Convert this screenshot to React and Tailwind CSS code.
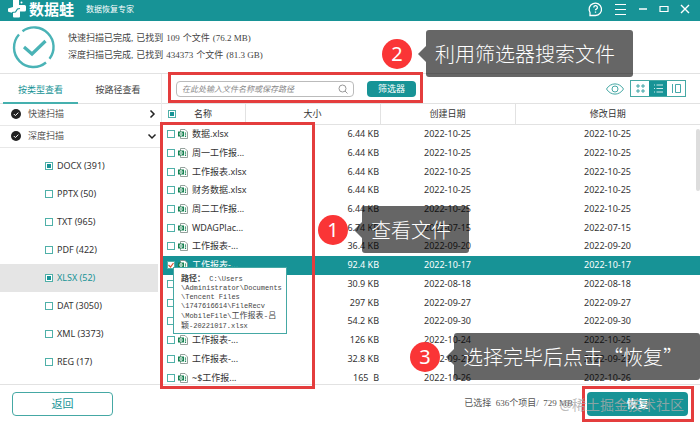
import React, { useState } from 'react';

const TYPES = [
  { name: 'DOCX', count: 391, checked: true },
  { name: 'PPTX', count: 50 },
  { name: 'TXT', count: 965 },
  { name: 'PDF', count: 422 },
  { name: 'XLSX', count: 52, checked: true, active: true },
  { name: 'DAT', count: 3050 },
  { name: 'XML', count: 3373 },
  { name: 'REG', count: 17 },
];

const FILES = [
  { name: '数据.xlsx', size: '6.44 KB', created: '2022-10-25', modified: '2022-10-25' },
  { name: '周一工作报...', size: '6.44 KB', created: '2022-10-25', modified: '2022-10-25' },
  { name: '工作报表.xlsx', size: '6.44 KB', created: '2022-10-25', modified: '2022-10-25' },
  { name: '财务数据.xlsx', size: '6.44 KB', created: '2022-10-25', modified: '2022-10-25' },
  { name: '周二工作报...', size: '6.44 KB', created: '2022-10-25', modified: '2022-10-25' },
  { name: 'WDAGPlac...', size: '6.74 KB', created: '2022-07-15', modified: '2022-07-15' },
  { name: '工作报表-...', size: '36.4 KB', created: '2022-09-20', modified: '2022-09-20' },
  { name: '工作报表-...', size: '92.4 KB', created: '2022-10-17', modified: '2022-10-17', selected: true },
  { name: '工作报表-...', size: '30.9 KB', created: '2022-08-18', modified: '2022-08-18' },
  { name: '工作报表-...', size: '297 KB', created: '2022-09-27', modified: '2022-09-27' },
  { name: '工作报表-...', size: '54.2 KB', created: '2022-09-30', modified: '2022-09-30' },
  { name: '工作报表-...', size: '126 KB', created: '2022-10-24', modified: '2022-10-25' },
  { name: '工作报表-...', size: '32.8 KB', created: '2022-09-29', modified: '2022-09-29' },
  { name: '~$工作报...', size: '165\u00a0 B', created: '2022-10-26', modified: '2022-10-26' },
];

const boxBase = 'block size-2 shrink-0 appearance-none border border-[#4fb0a8] bg-white';
const boxPartial = 'checked:bg-[#179396] checked:shadow-[inset_0_0_0_1px_white]';

function Logo() {
  return (
    <svg className="h-[18px] w-[18px]" viewBox="0 0 18 18" fill="white" aria-hidden="true">
      <path d="M5 0h6v5h5.500a1.500 1.500 0 0 1 1.500 1.500v3.500a1.500 1.500 0 0 1-1.500 1.500H12v5a1 1 0 0 1-1 1H6a1 1 0 0 1-1-1V13L1 12a1 1 0 0 1-1-1V8.500L5 7z" />
      <path d="M4 12.500l3.500-.5 2-3 2.500-.5" fill="none" stroke="#179396" strokeWidth="1.200" />
      <circle cx="13.500" cy="2.500" r="1" />
    </svg>
  );
}

function TitleBar() {
  return (
    <header className="flex h-[21px] shrink-0 items-center bg-[#179396] pr-[9px] pb-[3px] pl-2 text-white">
      <Logo />
      <h1 className="ml-[3px] text-[15px] leading-4 font-bold">数据蛙</h1>
      <span className="ml-3 text-[8px] leading-4">数据恢复专家</span>
      <div className="ml-auto flex items-center gap-[9px]">
        <button type="button" aria-label="help" className="size-4">
          <svg viewBox="0 0 16 16" className="size-4" fill="none" stroke="currentColor" strokeWidth="1.300">
            <path d="M3 14.500V11.500A6.200 6.200 0 1 1 8.500 14.500z" />
            <path d="M6.800 6.500a1.800 1.800 0 1 1 2.500 1.600c-.6.300-.8.600-.8 1.200M8.500 10.500v1.200" />
          </svg>
        </button>
        <button type="button" aria-label="menu" className="size-4">
          <svg viewBox="0 0 16 16" className="size-4" stroke="currentColor" strokeWidth="1.200">
            <path d="M3 3.500h11M3 8.500h11M3 13.500h11" />
          </svg>
        </button>
        <button type="button" aria-label="minimize" className="size-3">
          <svg viewBox="0 0 12 12" className="size-3" stroke="currentColor" strokeWidth="1.500">
            <path d="M2 6h8" />
          </svg>
        </button>
        <button type="button" aria-label="maximize" className="size-3">
          <svg viewBox="0 0 12 12" className="size-3" fill="none" stroke="currentColor" strokeWidth="1.200">
            <path d="M2 3.500h8v5h-8z" />
          </svg>
        </button>
        <button type="button" aria-label="close" className="size-3">
          <svg viewBox="0 0 12 12" className="size-3" stroke="currentColor" strokeWidth="1.400">
            <path d="M2 2l8 8M10 2l-8 8" />
          </svg>
        </button>
      </div>
    </header>
  );
}

function ScanLine({ label, count, size }) {
  return (
    <p className="flex gap-[3px]">
      <span>{label},</span>
      <span>已找到</span>
      <span>{count}</span>
      <span>个文件</span>
      <span>({size})</span>
    </p>
  );
}

function ScanStatus() {
  return (
    <section className="flex h-[53px] shrink-0 items-center border-b border-[#e2e2e2] pl-3">
      <svg className="size-11 shrink-0" viewBox="0 0 44 44" fill="none" stroke="#4ab3b6" aria-hidden="true">
        <path d="M34 37.500A19.500 19.500 0 0 1 7 9.500M10.500 6.200A19.500 19.500 0 0 1 37.500 33.800" strokeWidth="2.400" />
        <path d="M12 22l8 7 13.500-13" strokeWidth="3.200" />
      </svg>
      <div className="ml-3 font-['Liberation_Serif','Noto_Sans_CJK_SC',serif] text-[9px] leading-[17px] text-[#444]">
        <ScanLine label="快速扫描已完成" count="109" size="76.2 MB" />
        <ScanLine label="深度扫描已完成" count="434373" size="81.3 GB" />
      </div>
    </section>
  );
}

function CheckDot() {
  return (
    <svg className="size-[10px]" viewBox="0 0 10 10" aria-hidden="true">
      <circle cx="5" cy="5" r="5" fill="#222" />
      <path d="M2.800 5l1.600 1.600 2.900-3" fill="none" stroke="white" />
    </svg>
  );
}

function ScanGroup({ label, open }) {
  return (
    <button type="button" className="flex h-[22px] w-full items-center border-b border-[#e8e8e8] pr-1 pb-[2px] pl-[11px] text-[#555]">
      <CheckDot />
      <span className="ml-[7px]">{label}</span>
      <svg className="ml-auto size-[10px]" viewBox="0 0 10 10" fill="none" stroke="#222" strokeWidth="1.500" aria-hidden="true">
        {open ? <path d="M1.500 3.500L5 7l3.500-3.500" /> : <path d="M3.500 1.500L7 5 3.500 8.500" />}
      </svg>
    </button>
  );
}

function Sidebar() {
  return (
    <aside className="flex w-[162px] shrink-0 flex-col border-r border-[#ececec]">
      <nav className="flex h-[30px] shrink-0 border-b border-[#e2e2e2] px-[3px]">
        <button type="button" className="h-[30px] w-[75px] border-b-2 border-[#45b0ae] pt-1 text-[#179396]">按类型查看</button>
        <button type="button" className="h-[30px] flex-1 pt-1 pb-[2px] text-[#444]">按路径查看</button>
      </nav>
      <ScanGroup label="快速扫描" />
      <ScanGroup label="深度扫描" open />
      <ul className="mt-1 mr-[3px]">
        {TYPES.map((t) => (
          <li key={t.name} className={t.active ? 'bg-[#e5e5e5] text-[#179396]' : 'text-[#333]'}>
            <label className="flex h-7 items-center gap-1 pl-[45px]">
              <input type="checkbox" defaultChecked={t.checked} className={`${boxBase} ${boxPartial}`} />
              {t.name} ({t.count})
            </label>
          </li>
        ))}
      </ul>
    </aside>
  );
}

function Toolbar() {
  return (
    <div className="flex h-[30px] shrink-0 items-center border-b border-[#e2e2e2] pr-[14px] pl-[14px]">
      <div className="flex h-4 w-[178px] items-center rounded-sm border border-[#bbb] px-[5px]">
        <input
          type="text"
          aria-label="search"
          placeholder="在此处输入文件名称或保存路径"
          className="min-w-0 flex-1 text-[8px] italic outline-none placeholder:text-[#888]"
        />
        <svg className="size-[10px]" viewBox="0 0 10 10" fill="none" stroke="#999" aria-hidden="true">
          <circle cx="4.500" cy="4.500" r="3.500" />
          <path d="M7 7l2.500 2.500" />
        </svg>
      </div>
      <button type="button" className="ml-[13px] h-4 w-[49px] rounded-sm bg-[#179396] leading-4 text-white">筛选器</button>
      <button type="button" aria-label="preview" className="ml-auto">
        <svg className="h-3 w-[18px]" viewBox="0 0 18 12" fill="none" stroke="#45a8a4" aria-hidden="true">
          <path d="M.5 6C4.500-.8 13.500-.8 17.500 6 13.500 12.800 4.500 12.800.5 6z" />
          <circle cx="9" cy="6" r="3" />
        </svg>
      </button>
      <div className="ml-[6px] flex h-[17px] border border-[#45a8a4] text-[#179396]">
        <button type="button" aria-label="grid view" className="flex w-[18px] items-center justify-center">
          <svg className="size-[9px]" viewBox="0 0 9 9" fill="none" stroke="currentColor" strokeWidth=".8">
            <path d="M1 1h2v2h-2zM6 1h2v2h-2zM1 6h2v2h-2zM6 6h2v2h-2z" />
          </svg>
        </button>
        <button type="button" aria-label="list view" className="flex w-[18px] items-center justify-center bg-[#179396] text-white">
          <svg className="size-[9px]" viewBox="0 0 9 9" stroke="currentColor" strokeWidth=".8">
            <path d="M0 1h1M2.500 1H9M0 4.500h1M2.500 4.500H9M0 8h1M2.500 8H9" />
          </svg>
        </button>
        <button type="button" aria-label="detail view" className="flex w-[18px] items-center justify-center">
          <svg className="size-[9px]" viewBox="0 0 9 9" fill="none" stroke="currentColor" strokeWidth=".8">
            <path d="M.5 0v9M3.500 .5h5v8h-5z" />
          </svg>
        </button>
      </div>
    </div>
  );
}

function ExcelIcon() {
  return (
    <svg className="size-[10px] shrink-0" viewBox="0 0 10 10" aria-hidden="true">
      <path d="M2.500.5h4.500l2.500 2.500v6.500h-7z" fill="white" stroke="#7a8a84" strokeWidth=".8" />
      <path d="M7.500 3.500v4.500" stroke="#1f8a5b" strokeWidth="1.200" strokeDasharray="1.200 .5" />
      <path d="M0 2.500h6v5h-6z" fill="#14804f" />
      <path d="M2 3.800h2v2.400h-2z" fill="none" stroke="white" strokeWidth=".9" />
    </svg>
  );
}

function FileRow({ file }) {
  const [checked, setChecked] = useState(Boolean(file.selected));
  return (
    <tr className={file.selected ? 'bg-[#179396] text-white' : 'text-[#333]'}>
      <td className="p-0">
        <label className="flex items-center pl-[5px] whitespace-nowrap">
          <span className="relative">
            <input type="checkbox" checked={checked} onChange={() => setChecked(!checked)} className={boxBase} />
            {checked && (
              <svg className="absolute inset-0 size-2" viewBox="0 0 8 8" fill="none" stroke="#e0502f" strokeWidth="1.200">
                <path d="M1.500 4l2 2 3-4" />
              </svg>
            )}
          </span>
          <span className="ml-[3px]"><ExcelIcon /></span>
          <span className="ml-1">{file.name}</span>
        </label>
      </td>
      <td className="p-0 pr-[1px] text-right">{file.size}</td>
      <td className="p-0 text-center">{file.created}</td>
      <td className="p-0 text-center">{file.modified}</td>
    </tr>
  );
}

function FileTable() {
  return (
    <div className="relative min-h-0 flex-1 overflow-hidden">
      <table className="h-[283px] w-full table-fixed border-collapse leading-3">
        <thead>
          <tr className="h-5 text-[#333]">
            <th className="w-[83px] border-r border-b border-[#e2e2e2] p-0 font-normal">
              <label className="flex items-center pl-[6px]">
                <input type="checkbox" defaultChecked className={`${boxBase} ${boxPartial}`} />
                <span className="ml-[18px]">名称</span>
              </label>
            </th>
            <th className="w-[135px] border-r border-b border-[#e2e2e2] p-0 font-normal">大小</th>
            <th className="w-[135px] border-r border-b border-[#e2e2e2] p-0 font-normal">创建日期</th>
            <th className="border-b border-[#e2e2e2] p-0 font-normal">修改日期</th>
          </tr>
        </thead>
        <tbody>
          {FILES.map((file, i) => (
            <FileRow key={i} file={file} />
          ))}
        </tbody>
      </table>
      <div className="absolute top-[25px] right-0 h-[62px] w-1 rounded-full bg-[#ddd]" />
    </div>
  );
}

function Footer() {
  return (
    <footer className="flex h-[43px] shrink-0 items-center border-t border-[#e2e2e2] pr-3 pb-1 pl-3">
      <button type="button" className="h-6 w-[101px] rounded-[4px] border border-[#45a8a4] text-[11px] text-[#179396]">返回</button>
      <span className="mr-[14px] ml-auto font-['Liberation_Serif','Noto_Sans_CJK_SC',serif] text-[9px] text-[#555]">
        已选择&nbsp; 636个项目/&nbsp; 729 MB
      </span>
      <button type="button" className="h-6 w-[101px] rounded-[4px] bg-[#179396] text-[11px] font-bold text-white">恢复</button>
    </footer>
  );
}

function PathTooltip() {
  return (
    <div role="tooltip" className="absolute top-[267px] left-[173px] h-[67px] w-[114px] border border-[#45a8a4] bg-white pt-[6px] pl-[7px] font-['Liberation_Mono','Noto_Sans_CJK_SC',monospace] text-[7px] leading-[9px] whitespace-nowrap text-[#444]">
      <b className="text-[8px]">路径：</b> C:\Users<br />
      \Administrator\Documents<br />
      \Tencent Files<br />
      \1747616614\FileRecv<br />
      \MobileFile\<span className="text-[8px]">工作报表-吕</span><br />
      <span className="text-[8px]">颖</span>-20221017.xlsx
    </div>
  );
}

function Step({ number, text, className }) {
  return (
    <div className={`absolute flex items-center ${className}`}>
      <span className="flex size-[30px] shrink-0 items-center justify-center rounded-full bg-[#fa3536] text-[20px] leading-none text-white">
        {number}
      </span>
      <svg className="ml-[6px] h-4 w-2 shrink-0" viewBox="0 0 8 16" aria-hidden="true">
        <path d="M8 0v16L0 8z" fill="black" fillOpacity=".6" />
      </svg>
      <span className="flex h-[47px] flex-1 items-center rounded-[3px] bg-black/60 pl-[9px] font-['Noto_Sans_CJK_SC',sans-serif] text-[20px] font-light whitespace-nowrap text-white">
        {text}
      </span>
    </div>
  );
}

// Tutorial marks that lie over the window
function Guide() {
  return (
    <div className="pointer-events-none absolute inset-0 overflow-hidden">
      <div className="absolute top-[72px] left-[168px] h-[31px] w-[255px] border-3 border-[#e43d3d]" />
      <div className="absolute top-[122px] left-[160px] h-[267px] w-[155px] border-3 border-[#e43d3d]" />
      <div className="absolute right-[6px] bottom-[5px] h-[36px] w-[112px] border-3 border-[#e43d3d]" />
      <Step number="2" text="利用筛选器搜索文件" className="top-[30px] left-[382px] w-[251px]" />
      <Step number="1" text="查看文件" className="top-[206px] left-[318px] w-[151px]" />
      <Step number="3" text="选择完毕后点击“恢复”" className="top-[333px] left-[410px] w-[290px]" />
      <span className="absolute right-4 bottom-3 text-[14px] leading-5 text-[#aaa]/80">@稀土掘金技术社区</span>
    </div>
  );
}

export default function App() {
  return (
    <div lang="zh-CN" className="relative flex h-screen flex-col overflow-hidden bg-white font-['Noto_Sans','Noto_Sans_CJK_SC',sans-serif] text-[9px]">
      <TitleBar />
      <ScanStatus />
      <div className="flex min-h-0 flex-1">
        <Sidebar />
        <main className="flex min-w-0 flex-1 flex-col">
          <Toolbar />
          <FileTable />
        </main>
      </div>
      <Footer />
      <PathTooltip />
      <Guide />
    </div>
  );
}
